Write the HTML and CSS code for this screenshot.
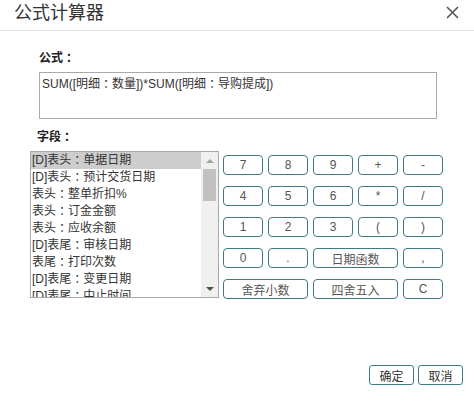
FILE: index.html
```html
<!DOCTYPE html>
<html lang="zh-CN">
<head>
  <meta charset="UTF-8" />
  <title>公式计算器</title>
  <link rel="stylesheet" href="styles.css">
</head>
<body>
  <div class="dialog">
    <div class="dialog-header">
      <span class="dialog-title">公式计算器</span>
      <span class="close-btn">
        <svg width="13" height="13" viewBox="0 0 13 13">
          <path d="M1 1 L12 12 M12 1 L1 12" stroke="#555" stroke-width="1.6" fill="none"/>
        </svg>
      </span>
    </div>

    <div class="label formula-label">公式<span class="cc">：</span></div>
    <div class="formula-box">SUM([明细<span class="cc">：</span>数量])*SUM([明细<span class="cc">：</span>导购提成])</div>

    <div class="label field-label">字段<span class="cc">：</span></div>
    <div class="fields">
      <div class="field-list">
        <div class="items">
          <div class="item selected">[D]表头<span class="cc">：</span>单据日期</div>
          <div class="item">[D]表头<span class="cc">：</span>预计交货日期</div>
          <div class="item">表头<span class="cc">：</span>整单折扣%</div>
          <div class="item">表头<span class="cc">：</span>订金金额</div>
          <div class="item">表头<span class="cc">：</span>应收余额</div>
          <div class="item">[D]表尾<span class="cc">：</span>审核日期</div>
          <div class="item">表尾<span class="cc">：</span>打印次数</div>
          <div class="item">[D]表尾<span class="cc">：</span>变更日期</div>
          <div class="item">[D]表尾<span class="cc">：</span>中止时间</div>
        </div>
        <div class="scrollbar">
          <div class="arrow up"></div>
          <div class="thumb"></div>
          <div class="arrow down"></div>
        </div>
      </div>

      <div class="keys">
        <button class="key">7</button>
        <button class="key">8</button>
        <button class="key">9</button>
        <button class="key">+</button>
        <button class="key">-</button>
        <button class="key">4</button>
        <button class="key">5</button>
        <button class="key">6</button>
        <button class="key">*</button>
        <button class="key">/</button>
        <button class="key">1</button>
        <button class="key">2</button>
        <button class="key">3</button>
        <button class="key">(</button>
        <button class="key">)</button>
        <button class="key">0</button>
        <button class="key">.</button>
        <button class="key wide">日期函数</button>
        <button class="key">,</button>
        <button class="key wide">舍弃小数</button>
        <button class="key wide">四舍五入</button>
        <button class="key">C</button>
      </div>
    </div>

    <div class="dialog-footer">
      <button class="foot-btn">确定</button>
      <button class="foot-btn">取消</button>
    </div>
  </div>
</body>
</html>
```

FILE: styles.css
```css
body {
  margin: 0;
  background: #fff;
  font-family: 'Liberation Sans', 'Noto Sans CJK SC', sans-serif;
  font-size: 12px;
  color: #333;
}

.dialog {
  width: 474px;
  height: 408px;
  background: #fff;
}

/* the original UI draws the full-width colon centred in its cell */
.cc {
  font-feature-settings: "halt";
  padding: 0 0.25em;
}

.dialog-header {
  display: flex;
  justify-content: space-between;
  align-items: center;
  height: 30px;
  padding: 0 14px 0 14px;
  border-bottom: 1px solid #e5e5e5;
}

.dialog-title {
  font-size: 18px;
  line-height: 27px;
  margin-top: -3px;
  color: #333;
}

.close-btn {
  display: flex;
  margin-top: -5px;
  margin-right: 1px;
}

.label {
  font-weight: bold;
  line-height: 16px;
  color: #222;
}

.formula-label {
  margin: 19px 0 0 39px;
}

.formula-box {
  box-sizing: border-box;
  width: 398px;
  height: 47px;
  margin: 6px 0 0 39px;
  padding: 3px 2px;
  line-height: 16px;
  border: 1px solid #a9a9a9;
  color: #333;
}

.field-label {
  margin: 10px 0 0 37px;
}

.fields {
  display: flex;
  align-items: flex-start;
  gap: 4px;
  margin: 6px 0 0 30px;
}

.field-list {
  box-sizing: border-box;
  display: flex;
  width: 189px;
  height: 147px;
  border: 1px solid #a9a9a9;
  overflow: hidden;
}

.items {
  flex: 1;
}

.item {
  height: 17px;
  line-height: 17px;
  padding-left: 1px;
  white-space: nowrap;
  color: #333;
}

.item.selected {
  background: #cdcdcd;
}

.scrollbar {
  position: relative;
  width: 17px;
  background: #f0f0f0;
}

.arrow {
  position: absolute;
  left: 5px;
  width: 0;
  height: 0;
  border-left: 4px solid transparent;
  border-right: 4px solid transparent;
}

.arrow.up {
  top: 7px;
  border-bottom: 4px solid #a3a3a3;
}

.arrow.down {
  bottom: 6px;
  border-top: 4px solid #505050;
}

.thumb {
  position: absolute;
  top: 17px;
  left: 2px;
  width: 13px;
  height: 32px;
  background: #c1c1c1;
}

.keys {
  display: grid;
  grid-template-columns: repeat(5, 40px);
  grid-auto-rows: 20px;
  column-gap: 5px;
  row-gap: 11px;
  margin-top: 4px;
}

.key, .foot-btn {
  box-sizing: border-box;
  margin: 0;
  padding: 0;
  background: #fff;
  border: 1px solid #3f7b82;
  border-radius: 4px;
  font-family: 'Liberation Sans', 'Noto Sans CJK SC', sans-serif;
  font-size: 12px;
  color: #555;
  cursor: pointer;
}

.key.wide {
  grid-column: span 2;
}

.dialog-footer {
  display: flex;
  justify-content: flex-end;
  gap: 4px;
  margin-top: 66px;
  padding-right: 11px;
}

.foot-btn {
  width: 45px;
  height: 20px;
  border-radius: 3px;
  color: #333;
}
```
